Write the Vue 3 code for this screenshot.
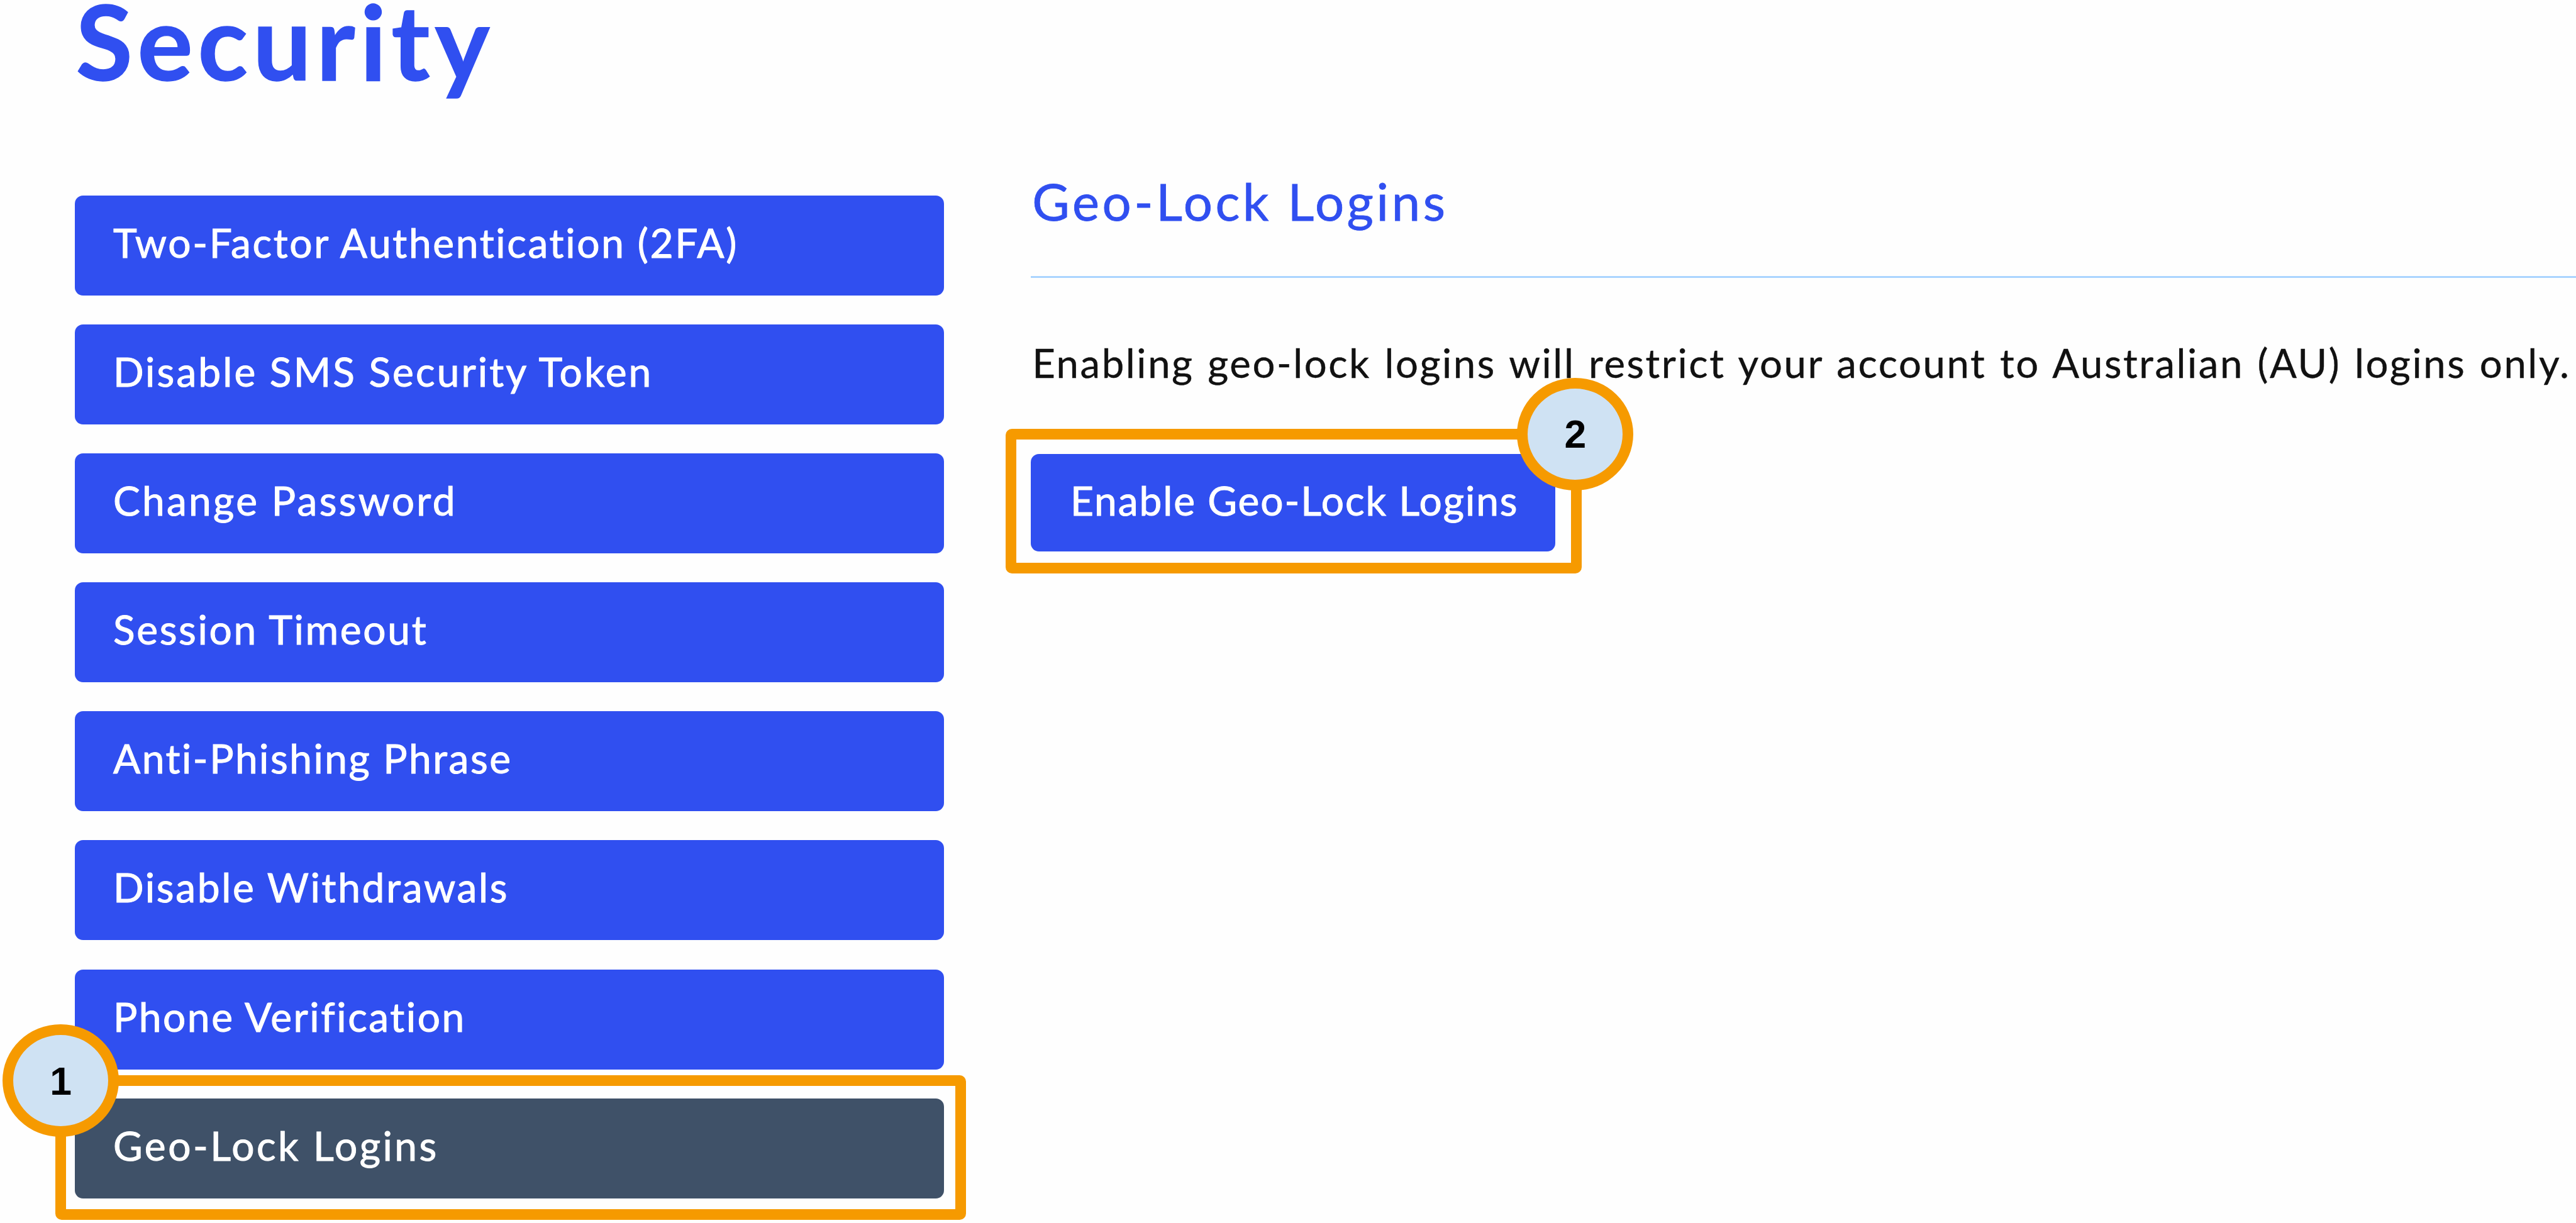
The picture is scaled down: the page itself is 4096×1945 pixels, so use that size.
<template>
  <div class="security-page">
    <h1 class="page-title">Security</h1>

    <div class="page-body">
      <nav class="security-menu">
        <div v-for="item in menuItems" :key="item.label" class="menu-item">
          <button
            class="menu-button"
            :class="{ active: item.label === activeItem }"
            :style="{ letterSpacing: `${item.spacing}px` }"
            @click="activeItem = item.label"
          >
            {{ item.label }}
          </button>
          <div v-if="item.step" class="highlight menu-highlight">
            <span class="step-badge">{{ item.step }}</span>
          </div>
        </div>
      </nav>

      <main class="panel">
        <h2 class="panel-title">Geo-Lock Logins</h2>
        <p class="panel-text">
          Enabling geo-lock logins will restrict your account to Australian (AU) logins only.
        </p>
        <div class="panel-action">
          <button class="enable-button">Enable Geo-Lock Logins</button>
          <div class="highlight action-highlight">
            <span class="step-badge">2</span>
          </div>
        </div>
      </main>
    </div>
  </div>
</template>

<script setup>
import { ref } from 'vue';

// spacing is the letter spacing of each label, in px
const menuItems = [
  { label: 'Two-Factor Authentication (2FA)', spacing: 2.67 },
  { label: 'Disable SMS Security Token', spacing: 3.1 },
  { label: 'Change Password', spacing: 3.28 },
  { label: 'Session Timeout', spacing: 2.7 },
  { label: 'Anti-Phishing Phrase', spacing: 2.52 },
  { label: 'Disable Withdrawals', spacing: 2.7 },
  { label: 'Phone Verification', spacing: 2.55 },
  { label: 'Geo-Lock Logins', spacing: 3.5, step: 1 },
];

const activeItem = ref('Geo-Lock Logins');
</script>

<style>
body {
  margin: 0;
  background-color: #fefefe;
}
</style>

<style scoped>
.security-page {
  box-sizing: border-box;
  width: 4096px;
  height: 1945px;
  padding-left: 119.4px;
  overflow: hidden;
  background-color: #fefefe;
  font-family: Lato, "Liberation Sans", sans-serif;
}

.page-title {
  margin: 0 0 131px;
  color: #304ff0;
  font-size: 165px;
  font-weight: 700;
  line-height: 129px;
  letter-spacing: 7.9px;
  text-indent: 1px;
  -webkit-text-stroke: 1.4px #304ff0;
}

.page-body {
  display: flex;
  align-items: flex-start;
  gap: 138.3px;
}

.security-menu {
  display: flex;
  flex-direction: column;
  flex: none;
  gap: 46.2px;
  width: 1381.6px;
  padding-top: 50.5px;
}

.menu-item {
  position: relative;
  height: 159px;
}

.menu-button,
.enable-button {
  display: block;
  box-sizing: border-box;
  border: none;
  border-radius: 13px;
  background-color: #304ff0;
  color: #fff;
  font-family: inherit;
  font-size: 64px;
  text-align: left;
  white-space: nowrap;
  cursor: pointer;
  -webkit-text-stroke: 1px #fff;
}

.menu-button {
  width: 100%;
  height: 159px;
  padding: 0 0 9px 60.6px;
  line-height: 150px;
}

.menu-button.active {
  background-color: #3f5168;
}

.panel {
  flex: 1;
  min-width: 0;
}

.panel-title {
  margin: 0;
  padding-bottom: 59.1px;
  border-bottom: 3px solid #aad4ff;
  color: #304ff0;
  font-size: 81.5px;
  font-weight: 400;
  line-height: 120px;
  letter-spacing: 4.6px;
  text-indent: 2px;
  -webkit-text-stroke: 0.8px #304ff0;
}

.panel-text {
  margin: 85px 0 94.5px;
  color: #111;
  font-size: 63.5px;
  line-height: 100px;
  letter-spacing: 2.55px;
  word-spacing: 2.8px;
  text-indent: 2px;
  white-space: nowrap;
  -webkit-text-stroke: 0.4px #111;
}

.panel-action {
  position: relative;
  width: 833.6px;
}

.enable-button {
  width: 100%;
  height: 155.5px;
  padding: 0 0 8.5px 62.8px;
  line-height: 147px;
  letter-spacing: 1.93px;
}

/* Orange frames with a numbered badge on one corner */
.highlight {
  position: absolute;
  box-sizing: border-box;
  border: 17px solid #f69a00;
  border-radius: 10px;
  pointer-events: none;
}

.menu-highlight {
  top: -36.4px;
  left: -31.3px;
  width: 1448.4px;
  height: 229.7px;
}

.action-highlight {
  top: -39.5px;
  left: -39.8px;
  width: 915.4px;
  height: 230.3px;
}

.step-badge {
  position: absolute;
  display: flex;
  align-items: center;
  justify-content: center;
  box-sizing: border-box;
  width: 184.7px;
  height: 179.3px;
  border: 17px solid #f69a00;
  border-radius: 50%;
  background-color: #cfe2f3;
  color: #000;
  font: 700 62.5px/1 "Liberation Sans", Arial, sans-serif;
}

.menu-highlight .step-badge {
  top: -98.3px;
  left: -100.8px;
}

.action-highlight .step-badge {
  top: -98.6px;
  right: -99.3px;
}
</style>
